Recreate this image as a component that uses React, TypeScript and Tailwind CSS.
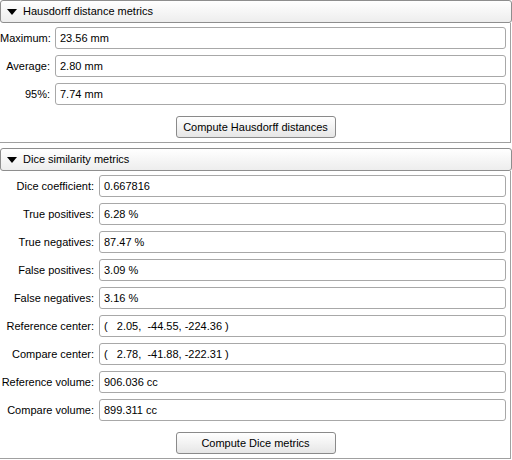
import React from "react";

type Row = { label: string; value: string };

const hausdorff: Row[] = [
  { label: "Maximum:", value: "23.56 mm" },
  { label: "Average:", value: "2.80 mm" },
  { label: "95%:", value: "7.74 mm" },
];

const dice: Row[] = [
  { label: "Dice coefficient:", value: "0.667816" },
  { label: "True positives:", value: "6.28 %" },
  { label: "True negatives:", value: "87.47 %" },
  { label: "False positives:", value: "3.09 %" },
  { label: "False negatives:", value: "3.16 %" },
  { label: "Reference center:", value: "(   2.05,  -44.55, -224.36 )" },
  { label: "Compare center:", value: "(   2.78,  -41.88, -222.31 )" },
  { label: "Reference volume:", value: "906.036 cc" },
  { label: "Compare volume:", value: "899.311 cc" },
];

function Header({ title }: { title: string }) {
  return (
    <div className="flex h-[23px] items-center rounded-[3px] border border-[#8e8e8e] bg-gradient-to-b from-white to-[#ededed] pl-[6px]">
      <svg width="10" height="6" viewBox="0 0 10 6" className="mr-[6px]">
        <polygon points="0,0 10,0 5,6" fill="#000" />
      </svg>
      <span>{title}</span>
    </div>
  );
}

function Field({ row, labelW }: { row: Row; labelW: string }) {
  return (
    <div className="flex items-center gap-[5px]">
      <div className={`${labelW} text-right`}>{row.label}</div>
      <div className="flex h-[22px] flex-1 items-center whitespace-pre rounded-[3px] border border-[#a8a8a8] bg-white pl-[4px]">
        {row.value}
      </div>
    </div>
  );
}

function Button({ text }: { text: string }) {
  return (
    <div className="flex justify-center pl-[5px]">
      <button className="h-[22px] w-[160px] rounded-[3px] border border-[#8a8a8a] bg-gradient-to-b from-white to-[#e6e6e6]">
        {text}
      </button>
    </div>
  );
}

export default function App() {
  return (
    <div
      className="h-[460px] w-[512px] bg-white text-[11px] text-black"
      style={{ fontFamily: '"Liberation Sans", Arial, sans-serif' }}
    >
      <Header title="Hausdorff distance metrics" />
      <div className="mr-[1px] flex flex-col border-r border-b border-[#a0a0a0] pt-[4px] pr-[4px] pb-[4px]">
        <div className="flex flex-col gap-[6px]">
          {hausdorff.map((r) => (
            <Field key={r.label} row={r} labelW="w-[50px]" />
          ))}
        </div>
        <div className="mt-[11px]">
          <Button text="Compute Hausdorff distances" />
        </div>
      </div>
      <div className="mt-[5px]">
        <Header title="Dice similarity metrics" />
      </div>
      <div className="mr-[1px] flex flex-col border-r border-b border-[#a0a0a0] pt-[4px] pr-[4px] pb-[4px]">
        <div className="flex flex-col gap-[6px]">
          {dice.map((r) => (
            <Field key={r.label} row={r} labelW="w-[94px]" />
          ))}
        </div>
        <div className="mt-[11px]">
          <Button text="Compute Dice metrics" />
        </div>
      </div>
    </div>
  );
}
